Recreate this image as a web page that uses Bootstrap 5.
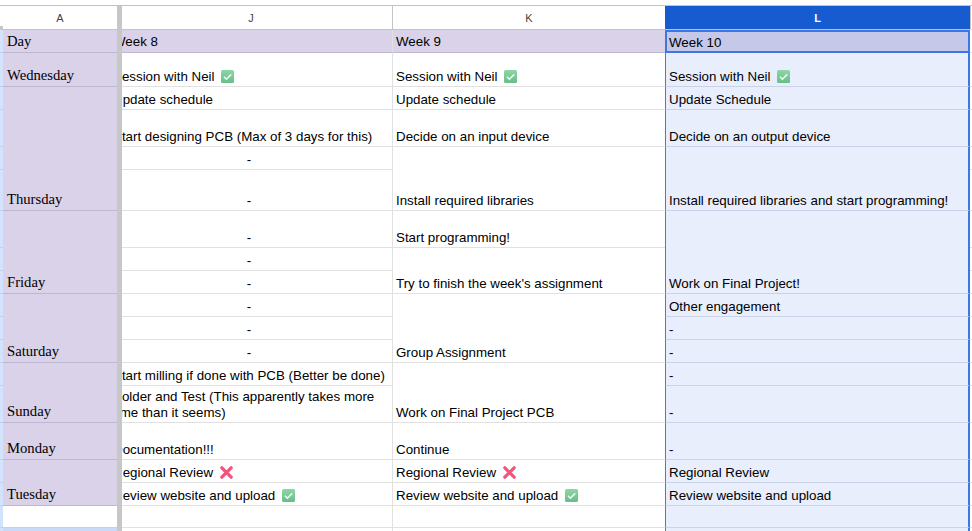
<!DOCTYPE html>
<html lang="en">
<head>
<meta charset="utf-8">
<title>Schedule</title>
<link href="https://cdn.jsdelivr.net/npm/bootstrap@5.3.0/dist/css/bootstrap.min.css" rel="stylesheet">
<style>
body{background:#fff;height:531px;color:#000}
.gs-wrap{padding-top:5px}
.table.gs{table-layout:fixed;width:972px;border-collapse:separate;border-spacing:0;margin:0;font:13.33px/16px "Liberation Sans",Arial,sans-serif;color:#000;--bs-table-bg:transparent}
.table.gs>*>tr>*{padding:0 3px 1px;border:0;border-bottom:1px solid #e1e1e1;background:#fff;color:#000;white-space:nowrap;overflow:hidden;box-shadow:none}
.table.gs>thead>tr>th{height:25px;border-top:1px solid #c4c4c4;border-bottom:1px solid #c4c4c4;border-right:1px solid #c4c4c4;font:11px/22px "Liberation Sans",Arial,sans-serif;color:#444;padding:0;vertical-align:middle}
.table.gs>thead>tr>th.gs-corner{border-right:0;border-bottom:4px solid #c7c7c7}
.table.gs>thead>tr>th.gs-cola{border-right:0}
.table.gs>thead>tr>th.gs-colk{border-right:0}
.table.gs>thead>tr>th.gs-coll{background:#165bd0;color:#fff;font-weight:700;border-right:0}
.table.gs>*>tr>.gs-end{padding:0;border-bottom-color:#e1e1e1}
.table.gs>thead>tr>th.gs-end{border-right:0;border-left:1px solid #c4c4c4}
.table.gs>tbody>tr>.gs-rowh{background:#d3e3fd;border-bottom-color:#c3d2ea;padding:0}
.table.gs>tbody>tr>.gs-bar,.table.gs>thead>tr>th.gs-bar{background:#c7c7c7;padding:0;border:0}
.table.gs>thead>tr>th.gs-bar{border-top:1px solid #c4c4c4}
.table.gs>tbody>tr>.gs-day{background:#d9d2e9;border-bottom-color:#bdb8d1;font:14.67px/17px "Liberation Serif","Times New Roman",serif;padding:0 3px 2px 4px;vertical-align:bottom}
.table.gs>tbody>tr>.gs-blank{background:#fff;border-bottom-color:#c3d2ea}
.table.gs>tbody>tr>.gs-rowb{background:#c9daf8;border-bottom:0}
.table.gs>tbody>tr>.gs-j{padding:0 0 1px;border-right:1px solid #e1e1e1;vertical-align:bottom}
.table.gs>tbody>tr>.gs-k{vertical-align:bottom}
.table.gs>tbody>tr>.gs-l{background:#e8eefb;border-left:1px solid #4a78d6;border-right:2px solid #3f76e4;border-bottom-color:#c9d2e6;vertical-align:bottom}
.table.gs>tbody>tr>.gs-head{background:#d9d2e9;border-bottom-color:#bdb8d1;padding-bottom:2px}
.table.gs>tbody>tr>.gs-sel{background:#c5c8e8;border:2px solid #3f76e4;padding:0 3px 0 2px;vertical-align:bottom}
.gs-inner{margin-left:-13px;padding-left:4px}
.gs-jhead{margin-left:-12px;text-align:center}
.gs-dash{margin-left:-16px;text-align:center}
.table.gs>tbody>tr>.gs-wrapcell{white-space:normal}
.gs-emoji{width:13px;height:13px;vertical-align:-2px;margin-left:3px}
.gs-r0{height:23px}.gs-r1{height:34px}.gs-r2{height:37px}.gs-r3{height:41px}.gs-r4{height:22px}.gs-r5{height:4px}
</style>
</head>
<body class="overflow-hidden">
<svg width="0" height="0" class="d-block position-absolute">
  <defs>
    <linearGradient id="gk" x1="0" y1="0" x2="0" y2="1"><stop offset="0" stop-color="#8ed6a6"/><stop offset="1" stop-color="#68bd89"/></linearGradient>
    <symbol id="chk" viewBox="0 0 13 13"><rect width="13" height="13" rx="1.5" fill="url(#gk)"/><path d="M3 6.8 5.4 9.2 10.2 4.4" fill="none" stroke="#eafaf0" stroke-width="1.6"/></symbol>
    <symbol id="crs" viewBox="0 0 14 14"><path d="M2 2 12 12M12 2 2 12" fill="none" stroke="#f1577c" stroke-width="3.6" stroke-linecap="round"/></symbol>
  </defs>
</svg>
<div class="gs-wrap">
<table class="table gs">
  <colgroup><col style="width:3px"><col style="width:114px"><col style="width:5px"><col style="width:271px"><col style="width:272px"><col style="width:305px"><col style="width:2px"></colgroup>
  <thead>
    <tr>
      <th class="gs-corner"></th>
      <th class="gs-cola text-center">A</th>
      <th class="gs-bar"></th>
      <th class="text-center"><div class="gs-jhead">J</div></th>
      <th class="gs-colk text-center">K</th>
      <th class="gs-coll text-center">L</th>
      <th class="gs-end"></th>
    </tr>
  </thead>
  <tbody>
    <tr class="gs-r0"><td class="gs-rowh"></td><td class="gs-day gs-head">Day</td><td class="gs-bar" rowspan="19"></td><td class="gs-j gs-head"><div class="gs-inner">Week 8</div></td><td class="gs-k gs-head">Week 9</td><td class="gs-sel">Week 10</td><td class="gs-end"></td></tr>
    <tr class="gs-r1"><td class="gs-rowh"></td><td class="gs-day">Wednesday</td><td class="gs-j"><div class="gs-inner">Session with Neil <svg class="gs-emoji"><use href="#chk"/></svg></div></td><td class="gs-k">Session with Neil <svg class="gs-emoji"><use href="#chk"/></svg></td><td class="gs-l">Session with Neil <svg class="gs-emoji"><use href="#chk"/></svg></td><td class="gs-end"></td></tr>
    <tr class="gs-r0"><td class="gs-rowh"></td><td class="gs-day" rowspan="4">Thursday</td><td class="gs-j"><div class="gs-inner">Update schedule</div></td><td class="gs-k">Update schedule</td><td class="gs-l">Update Schedule</td><td class="gs-end"></td></tr>
    <tr class="gs-r2"><td class="gs-rowh"></td><td class="gs-j"><div class="gs-inner">Start designing PCB (Max of 3 days for this)</div></td><td class="gs-k">Decide on an input device</td><td class="gs-l">Decide on an output device</td><td class="gs-end"></td></tr>
    <tr class="gs-r0"><td class="gs-rowh"></td><td class="gs-j"><div class="gs-dash">-</div></td><td class="gs-k" rowspan="2">Install required libraries</td><td class="gs-l" rowspan="2">Install required libraries and start programming!</td><td class="gs-end"></td></tr>
    <tr class="gs-r3"><td class="gs-rowh"></td><td class="gs-j"><div class="gs-dash">-</div></td><td class="gs-end"></td></tr>
    <tr class="gs-r2"><td class="gs-rowh"></td><td class="gs-day" rowspan="3">Friday</td><td class="gs-j"><div class="gs-dash">-</div></td><td class="gs-k">Start programming!</td><td class="gs-l" rowspan="3">Work on Final Project!</td><td class="gs-end"></td></tr>
    <tr class="gs-r0"><td class="gs-rowh"></td><td class="gs-j"><div class="gs-dash">-</div></td><td class="gs-k" rowspan="2">Try to finish the week's assignment</td><td class="gs-end"></td></tr>
    <tr class="gs-r0"><td class="gs-rowh"></td><td class="gs-j"><div class="gs-dash">-</div></td><td class="gs-end"></td></tr>
    <tr class="gs-r0"><td class="gs-rowh"></td><td class="gs-day" rowspan="3">Saturday</td><td class="gs-j"><div class="gs-dash">-</div></td><td class="gs-k" rowspan="3">Group Assignment</td><td class="gs-l">Other engagement</td><td class="gs-end"></td></tr>
    <tr class="gs-r0"><td class="gs-rowh"></td><td class="gs-j"><div class="gs-dash">-</div></td><td class="gs-l">-</td><td class="gs-end"></td></tr>
    <tr class="gs-r0"><td class="gs-rowh"></td><td class="gs-j"><div class="gs-dash">-</div></td><td class="gs-l">-</td><td class="gs-end"></td></tr>
    <tr class="gs-r0"><td class="gs-rowh"></td><td class="gs-day" rowspan="2">Sunday</td><td class="gs-j"><div class="gs-inner">Start milling if done with PCB (Better be done)</div></td><td class="gs-k" rowspan="2">Work on Final Project PCB</td><td class="gs-l">-</td><td class="gs-end"></td></tr>
    <tr class="gs-r2"><td class="gs-rowh"></td><td class="gs-j gs-wrapcell"><div class="gs-inner">Solder and Test (This apparently takes more time than it seems)</div></td><td class="gs-l">-</td><td class="gs-end"></td></tr>
    <tr class="gs-r2"><td class="gs-rowh"></td><td class="gs-day">Monday</td><td class="gs-j"><div class="gs-inner">Documentation!!!</div></td><td class="gs-k">Continue</td><td class="gs-l">-</td><td class="gs-end"></td></tr>
    <tr class="gs-r0"><td class="gs-rowh"></td><td class="gs-day" rowspan="2">Tuesday</td><td class="gs-j"><div class="gs-inner">Regional Review <svg class="gs-emoji"><use href="#crs"/></svg></div></td><td class="gs-k">Regional Review <svg class="gs-emoji"><use href="#crs"/></svg></td><td class="gs-l">Regional Review</td><td class="gs-end"></td></tr>
    <tr class="gs-r0"><td class="gs-rowh"></td><td class="gs-j"><div class="gs-inner">Review website and upload <svg class="gs-emoji"><use href="#chk"/></svg></div></td><td class="gs-k">Review website and upload <svg class="gs-emoji"><use href="#chk"/></svg></td><td class="gs-l">Review website and upload</td><td class="gs-end"></td></tr>
    <tr class="gs-r4"><td class="gs-rowh"></td><td class="gs-blank"></td><td class="gs-j"></td><td class="gs-k"></td><td class="gs-l"></td><td class="gs-end"></td></tr>
    <tr class="gs-r5"><td class="gs-rowh"></td><td class="gs-rowb"></td><td class="gs-j"></td><td class="gs-k"></td><td class="gs-l"></td><td class="gs-end"></td></tr>
  </tbody>
</table>
</div>
</body>
</html>
